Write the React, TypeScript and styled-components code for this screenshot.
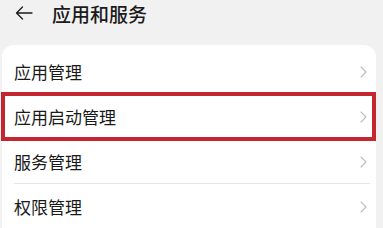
import styled, { createGlobalStyle } from "styled-components";

const GlobalStyle = createGlobalStyle`
    body {
        margin: 0;
        background-color: #f1f1f1;
        font-family: "Noto Sans CJK SC", "Noto Sans", sans-serif;
        overflow: hidden;
    }
`;

const StyledPage = styled.div`
    width: 383px;
    height: 228px;
    overflow: hidden;
`;

// Header

const StyledHeader = styled.div`
    height: 26px;
    display: flex;
    align-items: center;
    padding-left: 15px;
    gap: 19px;
`;
const StyledTitle = styled.h1`
    margin: 0;
    font-size: 19px;
    font-weight: 500;
    color: #1b1b1b;
`;
const BackIcon = styled.svg`
    width: 18px;
    height: 14px;
    display: block;
`;

// List card

const StyledCard = styled.div`
    margin: 19px 0 0 2px;
    width: 374px;
    padding-top: 4px;
    background-color: #ffffff;
    border-radius: 12px 12px 0 0;
`;

interface RowProps {
    $highlighted?: boolean;
    $divider?: boolean;
}

const StyledRow = styled.div<RowProps>`
    height: 45px;
    position: relative;
    display: flex;
    align-items: center;
    justify-content: space-between;
    padding: 0 9px 0 12px;

    &::before {
        content: "";
        position: absolute;
        left: 12px;
        right: 6px;
        bottom: 0;
        height: 1px;
        background-color: #e6e6e6;
        display: ${({ $divider }) => ($divider ? "block" : "none")};
    }
    &::after {
        content: "";
        position: absolute;
        top: -2px;
        bottom: -2px;
        left: -1px;
        right: 0px;
        border: 4px solid #c4262f;
        display: ${({ $highlighted }) => ($highlighted ? "block" : "none")};
    }
`;
const StyledLabel = styled.span`
    font-size: 17px;
    color: #1a1a1a;
`;
const ChevronIcon = styled.svg`
    width: 7px;
    height: 12px;
    display: block;
`;

const items = [
    { label: "应用管理" },
    { label: "应用启动管理", highlighted: true },
    { label: "服务管理" },
    { label: "权限管理" },
];

const App = () => {
    return (
        <StyledPage>
            <GlobalStyle />
            <StyledHeader>
                <BackIcon viewBox="0 0 18 14">
                    <path d="M17 7H1.5M7.5 1L1.5 7l6 6" fill="none" stroke="#1b1b1b" strokeWidth="1.3" strokeLinecap="round" strokeLinejoin="round" />
                </BackIcon>
                <StyledTitle>应用和服务</StyledTitle>
            </StyledHeader>
            <StyledCard>
                {items.map((item, i) => (
                    <StyledRow key={item.label} $highlighted={item.highlighted} $divider={i < items.length - 1}>
                        <StyledLabel>{item.label}</StyledLabel>
                        <ChevronIcon viewBox="0 0 7 12">
                            <path d="M1 1l5 5-5 5" fill="none" stroke="#bdbdbd" strokeWidth="1.1" strokeLinecap="round" strokeLinejoin="round" />
                        </ChevronIcon>
                    </StyledRow>
                ))}
            </StyledCard>
        </StyledPage>
    );
};

export default App;
